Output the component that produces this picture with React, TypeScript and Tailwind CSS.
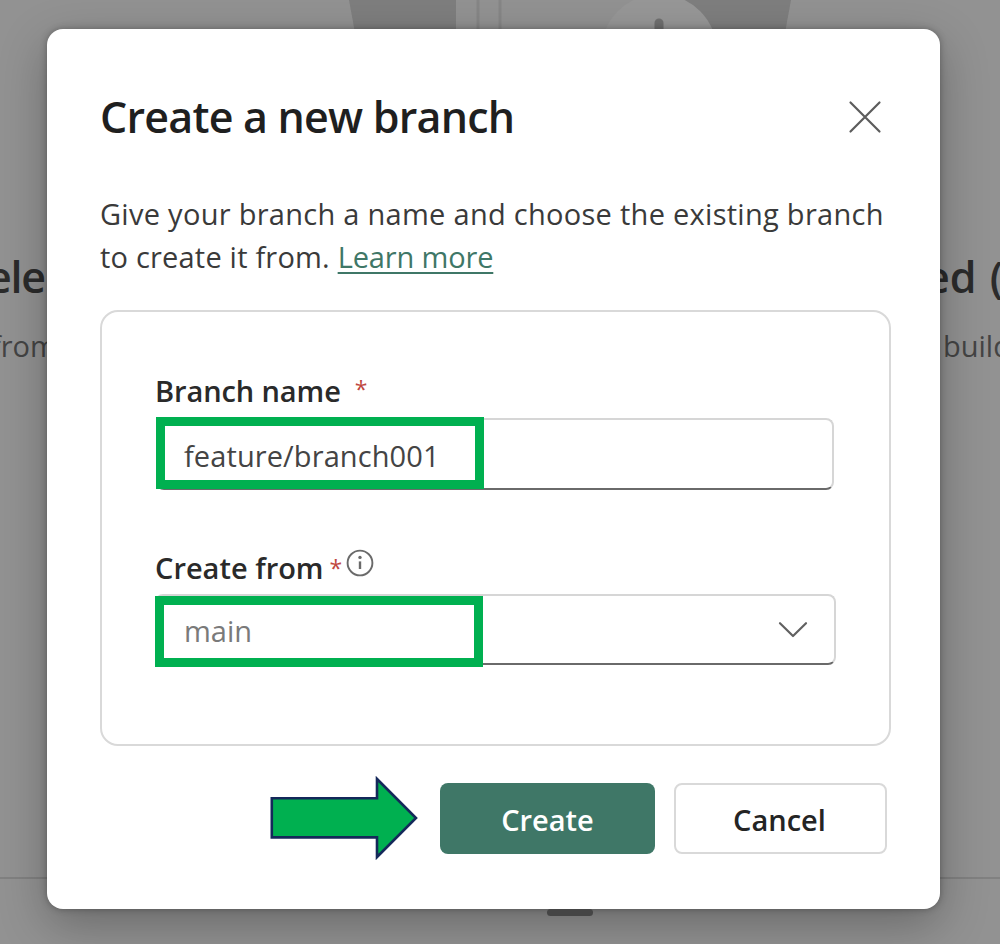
import React from 'react';

const Required: React.FC<{ className?: string }> = ({ className = '' }) => (
  <span className={`text-[#c0483f] text-[23px] font-normal ${className}`}>*</span>
);

// Thick green frame that calls out a field value
const Highlight: React.FC<{ className: string }> = ({ className }) => (
  <div className={`absolute border-[9px] border-[#00b050] pointer-events-none ${className}`} />
);

const CloseIcon: React.FC = () => (
  <svg width="34" height="34" viewBox="0 0 34 34" fill="none" stroke="#5c5c5c" strokeWidth="2.2" strokeLinecap="round">
    <path d="M2.5 2.5 31.5 31.5M31.5 2.5 2.5 31.5" />
  </svg>
);

const InfoIcon: React.FC = () => (
  <svg width="28" height="28" viewBox="0 0 28 28" fill="none" stroke="#6a6a6a">
    <circle cx="14" cy="14" r="12.4" strokeWidth="1.9" />
    <path d="M14 12.4v7.6" strokeWidth="2.4" />
    <circle cx="14" cy="8.4" r="1.7" fill="#6a6a6a" stroke="none" />
  </svg>
);

const ChevronIcon: React.FC = () => (
  <svg width="30" height="18" viewBox="0 0 30 18" fill="none" stroke="#616161" strokeWidth="2.2" strokeLinecap="round" strokeLinejoin="round">
    <path d="M2 2.2 15 15 28 2.2" />
  </svg>
);

const Arrow: React.FC = () => (
  <svg width="148" height="86" viewBox="0 0 148 86" fill="#00b050" stroke="#14285a" strokeWidth="2.6">
    <path d="M1.8 23.2H107V4L146 43 107 82V62.4H1.8Z" />
  </svg>
);

// Page that sits dimmed behind the dialog
const PageBehind: React.FC = () => (
  <div className="absolute inset-0 bg-[#929292]">
    <svg className="absolute left-0 top-0" width="1000" height="60" viewBox="0 0 1000 60">
      <path d="M349 0H791L780 60H360Z" fill="#7e7e7e" />
      <path d="M456 0H700V60H456Z" fill="#929292" />
      <path d="M684 0H760V60H722Z" fill="#7e7e7e" />
      <path d="M478 0V60M500 0V60" stroke="#868686" strokeWidth="3" />
      <circle cx="659" cy="52" r="58" fill="#979797" />
      <path d="M659 23V40" stroke="#707070" strokeWidth="9" strokeLinecap="round" />
    </svg>
    <div className="absolute left-[-13px] top-[248px] text-[43px] leading-[58px] tracking-[-1.2px] font-semibold text-[#2b2b2b]">ele</div>
    <div className="absolute left-[-9px] top-[326px] text-[29px] leading-10 text-[#444]">from</div>
    <div className="absolute left-[925px] top-[248px] text-[43px] leading-[58px] font-semibold text-[#2b2b2b] whitespace-nowrap">
      ed<span className="ml-[2px]"> (</span>
    </div>
    <div className="absolute left-[943px] top-[326px] text-[29px] leading-10 text-[#444]">build</div>
    <div className="absolute left-0 right-0 bottom-0 h-[67px] border-t-2 border-[#818181]" />
    <div className="absolute left-[547px] top-[909px] w-[46px] h-[7px] rounded-sm bg-[#454545] z-10" />
  </div>
);

const App: React.FC = () => {
  return (
    <div className="relative h-[944px] w-[1000px] overflow-hidden font-['Open_Sans','Noto_Sans',sans-serif]">
      <PageBehind />

      <div className="absolute left-[47px] top-[29px] w-[893px] h-[880px] bg-white rounded-2xl pl-[53px] pr-[49px] pt-[58px] shadow-[0_16px_48px_rgba(0,0,0,0.28),0_0_7px_rgba(0,0,0,0.3)]">
        <div className="flex items-center justify-between h-[60px] pr-[9px]">
          <h1 className="text-[43px] font-semibold text-[#1f1f1f] tracking-[-0.78px] whitespace-nowrap">Create a new branch</h1>
          <button type="button" aria-label="Close"><CloseIcon /></button>
        </div>

        <p className="mt-[45px] text-[29px] leading-[43px] text-[#3a3a3a] tracking-[0.28px] whitespace-nowrap">
          Give your branch a name and choose the existing branch
          <br />
          <span className="tracking-[0.2px]">to create it from. </span>
          <a className="text-[#3f7767] tracking-[-0.15px] underline decoration-2 underline-offset-[4px]">Learn more</a>
        </p>

        <form className="mt-[32px] w-[791px] h-[436px] rounded-[18px] border-2 border-[#d9d9d9] pl-[53px] pt-[54px]">
          <div className="flex h-[50px] items-center text-[29px] font-semibold text-[#2a2a2a]">
            <span className="tracking-[-0.1px]">Branch name</span>
            <Required className="ml-[14px] mb-1" />
          </div>
          <div className="relative flex items-center w-[678px] h-[72px] rounded-lg border-2 border-[#d6d6d6] border-b-[#6a6a6a] mt-[2px] pl-[26px] pt-1 ml-px text-[29px] text-[#444]">
            <span className="tracking-[0.1px]">feature/branch001</span>
            <Highlight className="-left-[2px] -top-[3px] w-[328px] h-[72px]" />
          </div>

          <div className="flex mt-[53px] h-[50px] items-center text-[29px] font-semibold text-[#2a2a2a]">
            <span>Create from</span>
            <Required className="ml-[6px]" />
            <span className="ml-[4px] mb-[10px]"><InfoIcon /></span>
          </div>
          <div className="relative flex items-center justify-between w-[681px] h-[71px] rounded-lg border-2 border-[#d6d6d6] border-b-[#6a6a6a] mt-px pl-[27px] pr-[26px] text-[29px] text-[#7a7a7a]">
            <span className="pt-[2px]">main</span>
            <ChevronIcon />
            <Highlight className="-left-[2px] top-0 w-[328px] h-[71px]" />
          </div>
        </form>

        <div className="flex mt-[29px] pl-[170px] items-center text-[29px] font-semibold">
          <Arrow />
          <button type="button" className="ml-[22px] w-[215px] h-[71px] pt-1 rounded-lg bg-[#3f7767] text-white">Create</button>
          <button type="button" className="ml-[19px] w-[213px] h-[71px] pt-1 pr-[2px] rounded-lg border-2 border-[#d9d9d9] text-[#242424]">Cancel</button>
        </div>
      </div>
    </div>
  );
};

export default App;
